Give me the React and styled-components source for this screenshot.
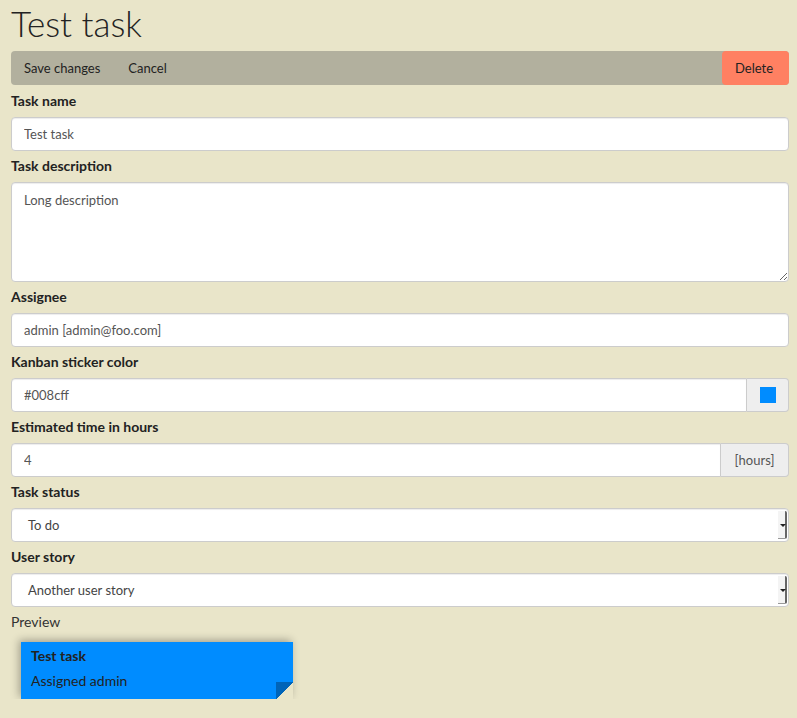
import React from 'react';
import styled, { createGlobalStyle } from 'styled-components';

const GlobalStyle = createGlobalStyle`
  html, body {
    margin: 0;
    background: #e9e5c9;
    font-family: Lato, "Noto Sans", sans-serif;
    color: #222;
  }
  * { box-sizing: border-box; }
`;

const App = () => {
  return (
    <Page>
      <GlobalStyle />
      <Title>Test task</Title>
      <Toolbar>
        <ToolButton>Save changes</ToolButton>
        <ToolButton>Cancel</ToolButton>
        <DeleteButton>Delete</DeleteButton>
      </Toolbar>

      <Group>
        <Label>Task name</Label>
        <Input defaultValue="Test task" />
      </Group>

      <Group>
        <Label>Task description</Label>
        <TextArea defaultValue="Long description" />
      </Group>

      <Group>
        <Label>Assignee</Label>
        <Input defaultValue="admin [admin@foo.com]" />
      </Group>

      <Group>
        <Label>Kanban sticker color</Label>
        <InputGroup>
          <GroupInput defaultValue="#008cff" />
          <Addon $width={42}>
            <Swatch color="#008cff" />
          </Addon>
        </InputGroup>
      </Group>

      <Group>
        <Label>Estimated time in hours</Label>
        <InputGroup>
          <GroupInput defaultValue="4" />
          <Addon $width={68}>[hours]</Addon>
        </InputGroup>
      </Group>

      <Group>
        <Label>Task status</Label>
        <SelectBox>
          <span>To do</span>
          <SelectArrow />
        </SelectBox>
      </Group>

      <Group>
        <Label>User story</Label>
        <SelectBox>
          <span>Another user story</span>
          <SelectArrow />
        </SelectBox>
      </Group>

      <PreviewLabel>Preview</PreviewLabel>
      <Sticker color="#008cff">
        <StickerTitle>Test task</StickerTitle>
        <StickerText>Assigned admin</StickerText>
        <Fold />
      </Sticker>
    </Page>
  );
};

const Page = styled.div`
  padding: 0 8px 0 11px;
`;

const Title = styled.h1`
  margin: 0;
  padding-top: 2px;
  font-size: 35px;
  line-height: 42px;
  font-weight: 300;
  color: #222;
  margin-bottom: 7px;
`;

const Toolbar = styled.div`
  display: flex;
  align-items: stretch;
  height: 34px;
  background: #b2b09e;
  border-radius: 4px;
  margin-bottom: 6px;
`;

const ToolButton = styled.div`
  display: flex;
  align-items: center;
  padding: 0 15px 0 13px;
  font-size: 13px;
  color: #222;
`;

const DeleteButton = styled.div`
  margin-left: auto;
  display: flex;
  align-items: center;
  padding: 0 13px;
  width: 67px;
  font-size: 13px;
  color: #222;
  background: #ff8062;
  border-radius: 4px;
`;

const Group = styled.div`
  margin-bottom: 5px;
`;

const Label = styled.div`
  font-size: 14px;
  font-weight: 700;
  line-height: 20px;
  margin-bottom: 6px;
  color: #222;
`;

const fieldBase = `
  width: 100%;
  height: 34px;
  padding: 0 12px;
  font-family: Lato, "Noto Sans", sans-serif;
  font-size: 13px;
  color: #555;
  background: #fff;
  border: 1px solid #ccc;
  border-radius: 4px;
  box-shadow: inset 0 1px 1px rgba(0, 0, 0, 0.075);
  outline: none;
`;

const Input = styled.input`
  ${fieldBase}
  display: block;
`;

const TextArea = styled.textarea`
  ${fieldBase}
  display: block;
  height: 100px;
  padding: 9px 12px;
  resize: vertical;
`;

const InputGroup = styled.div`
  display: flex;
`;

const GroupInput = styled.input`
  ${fieldBase}
  flex: 1;
  border-radius: 4px 0 0 4px;
`;

const Addon = styled.div`
  width: ${(p) => p.$width}px;
  display: flex;
  align-items: center;
  justify-content: center;
  background: #eee;
  border: 1px solid #ccc;
  border-left: none;
  border-radius: 0 4px 4px 0;
  font-size: 13px;
  color: #555;
`;

const Swatch = styled.div`
  width: 16px;
  height: 16px;
  background: ${(p) => p.color};
`;

const SelectBox = styled.div`
  ${fieldBase}
  display: flex;
  align-items: center;
  padding: 0 0 0 16px;
  position: relative;
  color: #444;
`;

const SelectArrow = styled.div`
  position: absolute;
  right: 1px;
  top: 2px;
  bottom: 2px;
  width: 9px;
  background: #f4f4f4;
  border-right: 2px solid #666;
  border-bottom: 1px solid #999;
  border-radius: 0 2px 2px 0;

  &::after {
    content: '';
    position: absolute;
    top: 50%;
    left: 2px;
    margin-top: -1px;
    border-left: 3px solid transparent;
    border-right: 3px solid transparent;
    border-top: 3px solid #222;
  }
`;

const PreviewLabel = styled.div`
  font-size: 14px;
  line-height: 20px;
  color: #333;
  margin-bottom: 10px;
`;

const Sticker = styled.div`
  position: relative;
  margin-left: 10px;
  width: 272px;
  height: 57px;
  padding: 4px 10px;
  background: ${(p) => p.color};
  box-shadow: -2px -2px 8px rgba(0, 0, 0, 0.3);
`;

const StickerTitle = styled.div`
  font-size: 14px;
  font-weight: 700;
  line-height: 20px;
  color: #222;
`;

const StickerText = styled.div`
  font-size: 14px;
  line-height: 20px;
  margin-top: 5px;
  color: #222;
`;

const Fold = styled.div`
  position: absolute;
  right: 0;
  bottom: 0;
  width: 17px;
  height: 17px;
  background: linear-gradient(to bottom right, #0064b8 50%, #e9e5c9 50%);
`;

export default App;
